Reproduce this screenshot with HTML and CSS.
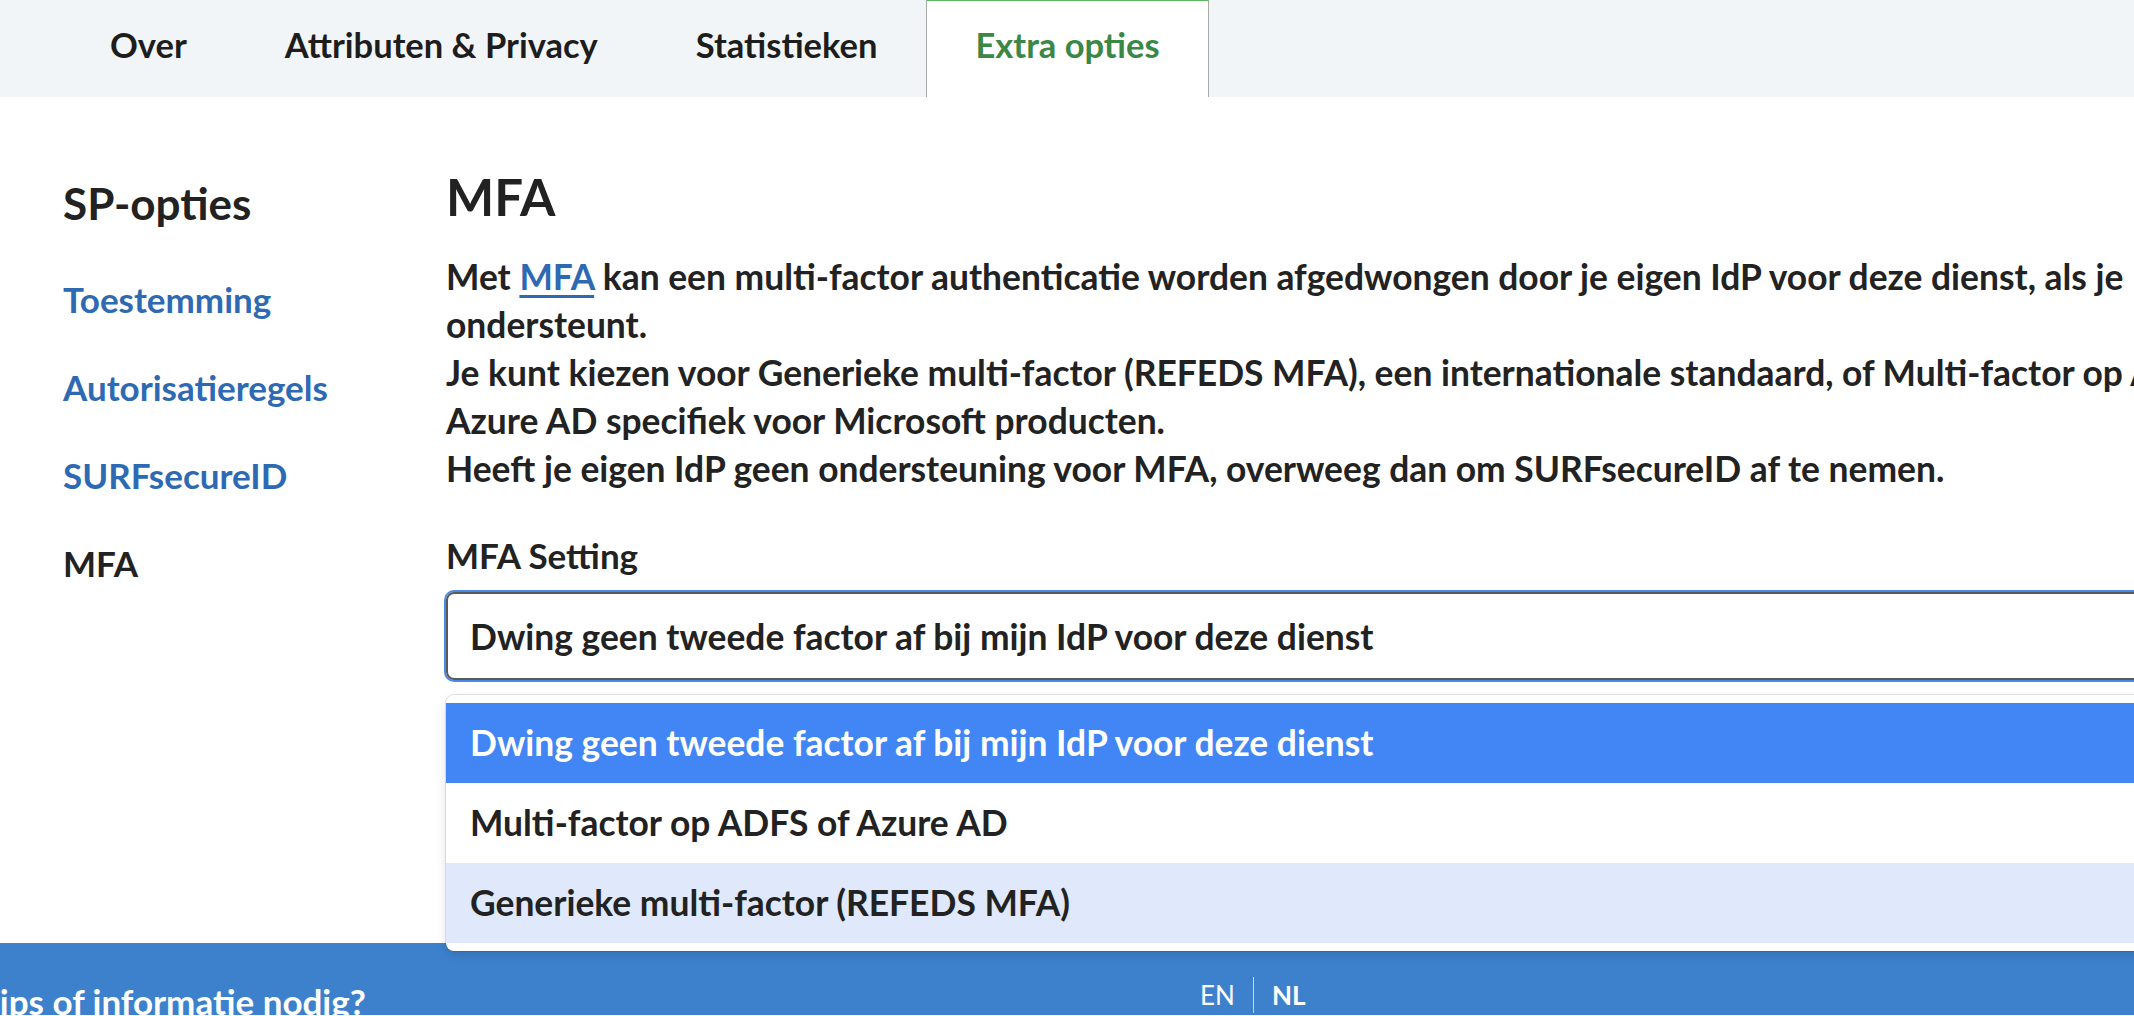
FILE: index.html
```html
<!DOCTYPE html>
<html lang="nl">
<head>
    <meta charset="UTF-8">
    <meta name="viewport" content="width=device-width, initial-scale=1.0">
    <title>Extra opties - MFA</title>
    <link rel="stylesheet" href="styles.css">
</head>
<body>
    <nav class="tabs">
        <a class="tab" href="#">Over</a>
        <a class="tab" href="#">Attributen &amp; Privacy</a>
        <a class="tab" href="#">Statistieken</a>
        <a class="tab active" href="#">Extra opties</a>
    </nav>

    <div class="layout">
        <aside class="sidebar">
            <h2>SP-opties</h2>
            <ul class="side-menu">
                <li><a href="#">Toestemming</a></li>
                <li><a href="#">Autorisatieregels</a></li>
                <li><a href="#">SURFsecureID</a></li>
                <li class="current">MFA</li>
            </ul>
        </aside>

        <main class="content">
            <h1>MFA</h1>
            <p class="intro">Met <a href="#">MFA</a> kan een multi-factor authenticatie worden afgedwongen door je eigen IdP voor deze dienst, als je IdP dit ondersteunt.<br>Je kunt kiezen voor Generieke multi-factor (REFEDS MFA), een internationale standaard, of Multi-factor op ADFS of Azure AD specifiek voor Microsoft producten.<br>Heeft je eigen IdP geen ondersteuning voor MFA, overweeg dan om SURFsecureID af te nemen.</p>

            <label class="field-label">MFA Setting</label>
            <div class="select">
                <div class="select-control">Dwing geen tweede factor af bij mijn IdP voor deze dienst</div>
                <ul class="select-menu">
                    <li class="option selected">Dwing geen tweede factor af bij mijn IdP voor deze dienst</li>
                    <li class="option">Multi-factor op ADFS of Azure AD</li>
                    <li class="option focused">Generieke multi-factor (REFEDS MFA)</li>
                </ul>
            </div>
        </main>
    </div>

    <footer class="footer">
        <h3>Tips of informatie nodig?</h3>
        <div class="lang">
            <a href="#">EN</a>
            <a class="active" href="#">NL</a>
        </div>
    </footer>
</body>
</html>
```

FILE: styles.css
```css
html, body {
    margin: 0;
    overflow: hidden;
}

body {
    font-family: Lato, "Open Sans", sans-serif;
    font-weight: 700;
    color: #222;
    background: #fff;
}

a {
    color: #2e6ab3;
    text-decoration: none;
}

/* tabs */
.tabs {
    display: flex;
    height: 97px;
    padding-left: 61px;
    background-color: #f1f5f8;
}

.tab {
    display: flex;
    align-items: center;
    padding: 0 48px 10px;
    font-size: 34.5px;
    color: #1d1d1d;
    border: 1px solid transparent;
    border-bottom: none;
}

.tab.active {
    background-color: #fff;
    color: #3b8746;
    border-color: #aaa;
    border-top-color: #5cb85c;
}

/* page */
.layout {
    display: grid;
    grid-template-columns: 383px 1850px;
    padding: 68px 0 263px 63px;
}

.sidebar h2 {
    font-size: 44px;
    line-height: 1.2;
    margin: 12px 0 0;
}

.side-menu {
    list-style: none;
    margin: 45px 0 0;
    padding: 0;
}

.side-menu li {
    font-size: 35px;
    line-height: 48px;
    margin-bottom: 40px;
}

.side-menu li.current {
    color: #222;
}

.content h1 {
    font-size: 51px;
    line-height: 64px;
    margin: 0;
}

.intro {
    font-size: 35.4px;
    line-height: 48px;
    margin: 24px 0 0;
}

.intro a {
    text-decoration: underline;
    text-decoration-thickness: 3px;
    text-underline-offset: 5px;
}

.field-label {
    display: block;
    font-size: 35px;
    line-height: 48px;
    margin-top: 38px;
}

/* select */
.select {
    position: relative;
    margin-top: 13px;
}

.select-control {
    height: 84px;
    display: flex;
    align-items: center;
    padding: 0 22px;
    font-size: 35.4px;
    border: 2px solid #5a5a5a;
    border-radius: 8px;
    box-shadow: 0 0 0 2px #4a89e8;
}

.select-menu {
    position: absolute;
    top: 100%;
    left: 0;
    right: 0;
    margin: 15px 0 0;
    padding: 8px 0;
    list-style: none;
    background: #fff;
    border-radius: 8px;
    box-shadow: 0 0 0 1px rgba(0, 0, 0, 0.1), 0 4px 11px rgba(0, 0, 0, 0.12);
}

.option {
    font-size: 35.4px;
    line-height: 48px;
    padding: 16px 24px;
}

.option.selected {
    background-color: #4285f4;
    color: #fff;
}

.option.focused {
    background-color: #dfe9fb;
}

/* footer */
.footer {
    display: grid;
    grid-template-columns: 1200px auto;
    align-items: start;
    height: 38px;
    padding-top: 34px;
    background-color: #3d81cd;
    color: #fff;
}

.footer h3 {
    margin: 0 0 0 -21px;
    font-size: 35px;
    line-height: 48px;
}

.lang {
    display: flex;
    font-size: 26px;
    line-height: 36px;
}

.lang a {
    color: #fff;
    font-weight: 400;
    padding-right: 18px;
}

.lang a.active {
    font-weight: 700;
    padding: 0 0 0 18px;
    border-left: 1px solid rgba(255, 255, 255, 0.7);
}
```
